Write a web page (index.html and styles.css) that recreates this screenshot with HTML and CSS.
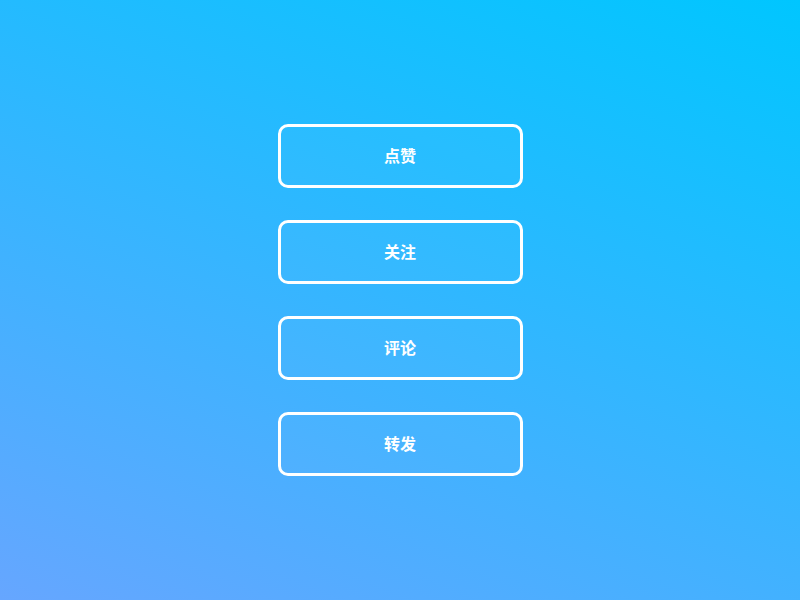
FILE: index.html
```html
<!DOCTYPE html>
<html lang="zh">
<head>
<meta charset="utf-8">
<title>按钮</title>
<link rel="stylesheet" href="styles.css">
</head>
<body>
<main class="stack">
  <button class="btn">点赞</button>
  <button class="btn">关注</button>
  <button class="btn">评论</button>
  <button class="btn">转发</button>
</main>
</body>
</html>
```
FILE: styles.css
```css
html, body {
  margin: 0;
  height: 100%;
}
body {
  background: linear-gradient(22deg, #66a6ff 0%, #00c6ff 100%);
  font-family: "Noto Sans CJK SC", "Noto Sans", sans-serif;
}
.stack {
  height: 100%;
  display: flex;
  flex-direction: column;
  align-items: center;
  justify-content: center;
  gap: 32px;
}
.btn {
  box-sizing: border-box;
  width: 245px;
  height: 64px;
  padding: 0 0 2px;
  display: flex;
  align-items: center;
  justify-content: center;
  border: 3px solid #fff;
  border-radius: 10px;
  background: rgba(255, 255, 255, 0.03);
  color: #fff;
  font-family: inherit;
  font-size: 16px;
  font-weight: 700;
  cursor: pointer;
}
```
